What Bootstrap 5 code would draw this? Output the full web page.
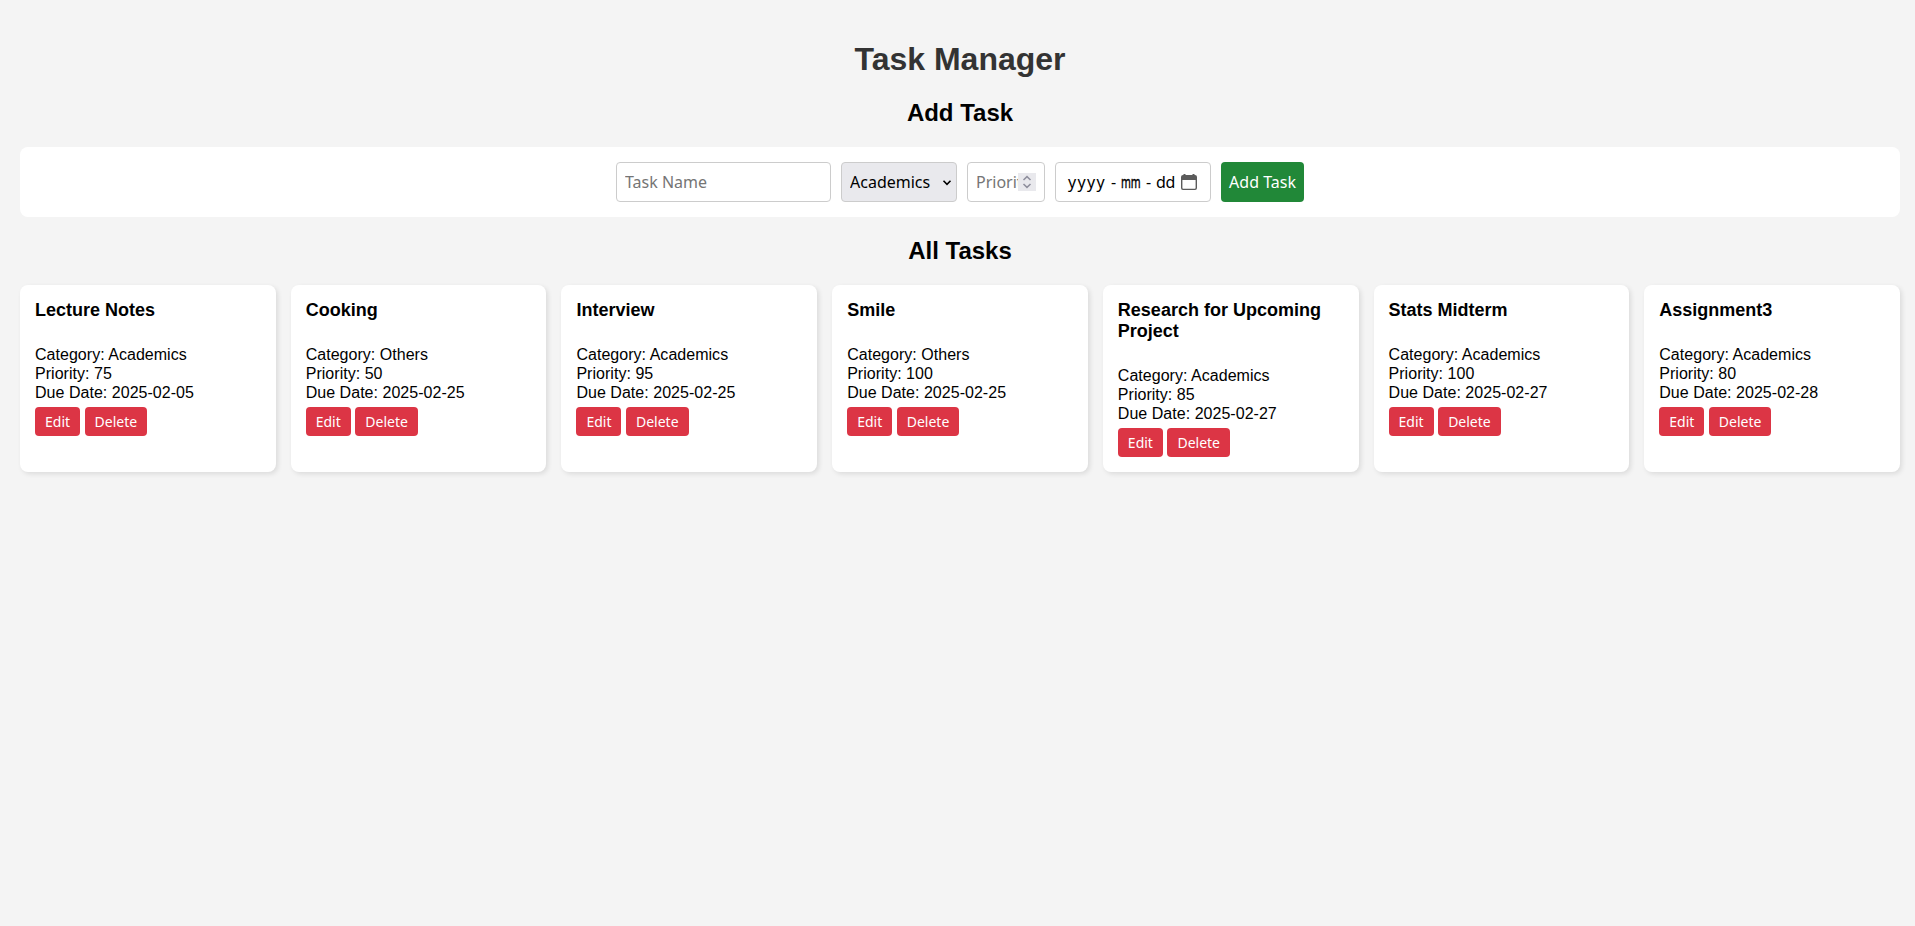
<!DOCTYPE html>
<html lang="en">
<head>
<meta charset="utf-8">
<meta name="viewport" content="width=device-width, initial-scale=1">
<title>Task Manager</title>
<link href="https://cdn.jsdelivr.net/npm/bootstrap@5.3.0/dist/css/bootstrap.min.css" rel="stylesheet">
<style>
  body { background: #f4f4f4; color: #000; font: 16px/19px "Liberation Sans", Arial, sans-serif; padding: 41px 15px 20px 20px; }
  h1 { font-size: 32px; line-height: 37px; font-weight: 700; color: #333; margin: 0 0 21px; }
  h2 { font-size: 24px; line-height: 27px; font-weight: 700; margin: 0 0 21px; }
  .task-form { height: 70px; padding: 15px; gap: 10px; border-radius: 8px; margin-bottom: 20px; }
  .field { font: 16px/22px "Noto Sans", sans-serif; height: 40px; padding: 8px; border: 1px solid #ccc; border-radius: 4px; color: #000; background-color: #fff; }
  .field::placeholder, .prio-text::placeholder { color: #757575; opacity: 1; }
  .f-name { width: 215px; }
  .f-cat { width: 116px; background: #e9e9ed url("data:image/svg+xml,%3Csvg xmlns='http://www.w3.org/2000/svg' width='10' height='8'%3E%3Cpath d='M1.5 1.8 5 5.3 8.5 1.8' fill='none' stroke='%23000' stroke-width='1.6'/%3E%3C/svg%3E") no-repeat right 4px top 16px; appearance: none; }
  .f-prio { width: 78px; }
  .prio-text { width: 42px; font: inherit; border: 0; padding: 0; background: none; appearance: none; }
  .f-date { width: 156px; padding: 8px 12px; }
  .seg-y { width: 43px; letter-spacing: 1.3px; }
  .dash { width: 10px; }
  .seg-m { width: 25px; }
  .seg-m span { display: inline-block; transform: scaleX(.66); transform-origin: left; -webkit-text-stroke: .4px #000; }
  .seg-d { width: 25px; letter-spacing: -.3px; }
  .btn-add { font: 16px/22px "Noto Sans", sans-serif; width: 83px; height: 40px; padding: 0; color: #fff; background: #218838; border: 0; border-radius: 4px; white-space: nowrap; }
  .task-grid { display: grid; grid-template-columns: repeat(7, minmax(0, 1fr)); gap: 15px; }
  .task-item { background: #fff; border-radius: 8px; padding: 15px; box-shadow: 2px 2px 5px rgba(0,0,0,.1); }
  .task-item h3 { font-size: 18px; line-height: 21px; font-weight: 700; margin: 0 0 24px; }
  .task-item .line { letter-spacing: .03px; }
  .btn-task { font: 14px/19px "Noto Sans", sans-serif; padding: 5px 10px; color: #fff; background: #dc3545; border: 0; border-radius: 4px; }
  .actions { gap: 4.5px; margin-top: 5px; }
</style>
</head>
<body>
<h1 class="text-center">Task Manager</h1>
<h2 class="text-center">Add Task</h2>
<form class="task-form bg-white d-flex justify-content-center">
  <input class="field f-name" type="text" placeholder="Task Name">
  <select class="field f-cat"><option>Academics</option><option>Others</option></select>
  <div class="field f-prio d-flex align-items-center">
    <input class="prio-text" type="text" placeholder="Priority">
    <svg class="flex-shrink-0" width="18" height="18" viewBox="0 0 18 18"><path fill="#e9e9ed" d="M0 0h18v18H0z"/><path d="M5.5 7 9 3.6 12.5 7M5.5 11 9 14.4 12.5 11" fill="none" stroke="#8f8f9d" stroke-width="1.5"/></svg>
  </div>
  <div class="field f-date d-flex align-items-center">
    <span class="seg-y">yyyy</span><span class="dash">-</span><span class="seg-m"><span>mm</span></span><span class="dash">-</span><span class="seg-d">dd</span>
    <svg class="flex-shrink-0" width="16" height="16" viewBox="0 0 16 16"><path fill="#5b5b5b" fill-rule="evenodd" d="M2.5 0h2v1h7V0h2v1h.5a2 2 0 0 1 2 2v11a2 2 0 0 1-2 2H2a2 2 0 0 1-2-2V3a2 2 0 0 1 2-2h.5zM1.4 6v8c0 .4.3.7.7.7h11.8c.4 0 .7-.3.7-.7V6z"/></svg>
  </div>
  <button class="btn-add" type="button">Add Task</button>
</form>
<h2 class="text-center">All Tasks</h2>
<main class="task-grid">
  <article class="task-item"><h3>Lecture Notes</h3><div class="line">Category: Academics</div><div class="line">Priority: 75</div><div class="line">Due Date: 2025-02-05</div><div class="actions d-flex"><button class="btn-task">Edit</button><button class="btn-task">Delete</button></div></article>
  <article class="task-item"><h3>Cooking</h3><div class="line">Category: Others</div><div class="line">Priority: 50</div><div class="line">Due Date: 2025-02-25</div><div class="actions d-flex"><button class="btn-task">Edit</button><button class="btn-task">Delete</button></div></article>
  <article class="task-item"><h3>Interview</h3><div class="line">Category: Academics</div><div class="line">Priority: 95</div><div class="line">Due Date: 2025-02-25</div><div class="actions d-flex"><button class="btn-task">Edit</button><button class="btn-task">Delete</button></div></article>
  <article class="task-item"><h3>Smile</h3><div class="line">Category: Others</div><div class="line">Priority: 100</div><div class="line">Due Date: 2025-02-25</div><div class="actions d-flex"><button class="btn-task">Edit</button><button class="btn-task">Delete</button></div></article>
  <article class="task-item"><h3>Research for Upcoming Project</h3><div class="line">Category: Academics</div><div class="line">Priority: 85</div><div class="line">Due Date: 2025-02-27</div><div class="actions d-flex"><button class="btn-task">Edit</button><button class="btn-task">Delete</button></div></article>
  <article class="task-item"><h3>Stats Midterm</h3><div class="line">Category: Academics</div><div class="line">Priority: 100</div><div class="line">Due Date: 2025-02-27</div><div class="actions d-flex"><button class="btn-task">Edit</button><button class="btn-task">Delete</button></div></article>
  <article class="task-item"><h3>Assignment3</h3><div class="line">Category: Academics</div><div class="line">Priority: 80</div><div class="line">Due Date: 2025-02-28</div><div class="actions d-flex"><button class="btn-task">Edit</button><button class="btn-task">Delete</button></div></article>
</main>
<script src="https://cdn.jsdelivr.net/npm/bootstrap@5.3.0/dist/js/bootstrap.bundle.min.js"></script>
</body>
</html>
